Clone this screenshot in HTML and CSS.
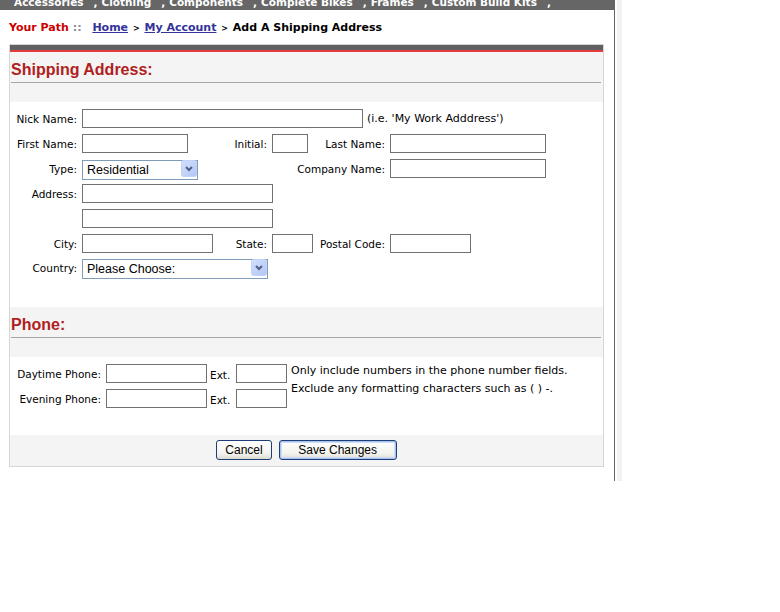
FILE: index.html
```html
<!DOCTYPE html>
<html lang="en">
<head>
  <meta charset="UTF-8">
  <title>Add A Shipping Address</title>
  <link rel="stylesheet" href="styles.css">
</head>
<body>
  <div class="shell">
    <div class="page">
      <div class="nav">
        <ul class="nav-list">
          <li>Accessories</li><li class="sep">,</li>
          <li>Clothing</li><li class="sep">,</li>
          <li>Components</li><li class="sep">,</li>
          <li>Complete Bikes</li><li class="sep">,</li>
          <li>Frames</li><li class="sep">,</li>
          <li>Custom Build Kits</li><li class="sep">,</li>
        </ul>
      </div>

      <div class="path">
        <span class="path-label">Your Path</span>
        <span class="path-colons">::</span>
        <a href="#" class="path-link">Home</a>
        <span class="gt">&gt;</span>
        <a href="#" class="path-link">My Account</a>
        <span class="gt">&gt;</span>
        <span class="path-current">Add A Shipping Address</span>
      </div>

      <form class="box">
        <div class="box-top"></div>

        <div class="section-head"><h2>Shipping Address:</h2></div>
        <div class="section-body addr-body">
          <div class="addr-grid">
            <label class="lbl">Nick Name:</label>
            <div class="nick-cell">
              <input type="text" class="in-nick">
              <span class="hint">(i.e. 'My Work Adddress')</span>
            </div>

            <label class="lbl">First Name:</label>
            <input type="text" class="in-first">
            <label class="lbl">Initial:</label>
            <input type="text" class="in-initial">
            <label class="lbl">Last Name:</label>
            <input type="text" class="in-last">

            <label class="lbl">Type:</label>
            <div class="select-wrap sel-type">
              <select><option>Residential</option></select>
              <span class="sel-btn"><svg width="16" height="17" viewBox="0 0 16 17"><defs><linearGradient id="g1" x1="0" y1="0" x2="1" y2="1"><stop offset="0" stop-color="#d3e0fd"/><stop offset="1" stop-color="#b1c6f4"/></linearGradient></defs><rect x="0.5" y="0.5" width="15" height="16" rx="2" fill="url(#g1)" stroke="#c3d3f7"/><path d="M5 7 L8 10 L11 7" fill="none" stroke="#4d6185" stroke-width="2"/></svg></span>
            </div>
            <label class="lbl lbl-company">Company Name:</label>
            <input type="text" class="in-company">

            <label class="lbl">Address:</label>
            <input type="text" class="in-address row-end">
            <span></span>
            <input type="text" class="in-address row-end">

            <label class="lbl">City:</label>
            <input type="text" class="in-city">
            <label class="lbl">State:</label>
            <input type="text" class="in-state">
            <label class="lbl">Postal Code:</label>
            <input type="text" class="in-postal">

            <label class="lbl lbl-country">Country:</label>
            <div class="select-wrap sel-country row-end">
              <select><option>Please Choose:</option></select>
              <span class="sel-btn"><svg width="16" height="17" viewBox="0 0 16 17"><defs><linearGradient id="g2" x1="0" y1="0" x2="1" y2="1"><stop offset="0" stop-color="#d3e0fd"/><stop offset="1" stop-color="#b1c6f4"/></linearGradient></defs><rect x="0.5" y="0.5" width="15" height="16" rx="2" fill="url(#g2)" stroke="#c3d3f7"/><path d="M5 7 L8 10 L11 7" fill="none" stroke="#4d6185" stroke-width="2"/></svg></span>
            </div>
          </div>
        </div>

        <div class="section-head"><h2>Phone:</h2></div>
        <div class="section-body phone-body">
          <div class="phone-grid">
            <label class="lbl">Daytime Phone:</label>
            <input type="text" class="in-phone">
            <span class="ext">Ext.</span>
            <input type="text" class="in-ext">
            <p class="phone-note">Only include numbers in the phone number fields.<br>Exclude any formatting characters such as ( ) -.</p>

            <label class="lbl">Evening Phone:</label>
            <input type="text" class="in-phone">
            <span class="ext">Ext.</span>
            <input type="text" class="in-ext">
          </div>
        </div>

        <div class="actions">
          <button type="button" class="btn">Cancel</button>
          <button type="button" class="btn btn-primary">Save Changes</button>
        </div>
      </form>
    </div>
  </div>
</body>
</html>
```

FILE: styles.css
```css
body {
  margin: 0;
  background-color: #ffffff;
  font-family: "DejaVu Sans", Verdana, sans-serif;
  color: #000000;
}

.shell {
  width: 617px;
  border-right: 5px solid #f2f2f2;
}

.page {
  width: 614px;
  border-right: 1px solid #666666;
  padding-bottom: 14px;
}

/* top menu, only the lower half shows */
.nav {
  height: 10px;
  overflow: hidden;
  background-color: #666666;
}

.nav-list {
  list-style: none;
  margin: -4px 0 0 0;
  padding: 0 0 0 14px;
  display: flex;
  font-size: 10.5px;
  font-weight: bold;
  line-height: 13px;
  color: #ffffff;
  white-space: nowrap;
}

.nav-list .sep {
  padding: 0 4px 0 10px;
}

/* breadcrumb */
.path {
  padding: 10px 9px 0 9px;
  margin-bottom: 7px;
  font-size: 11px;
  font-weight: bold;
  line-height: 16px;
  white-space: nowrap;
}

.path-label {
  color: #cc0000;
}

.path-colons {
  color: #8c8c8c;
  margin-right: 7px;
}

.path-link {
  color: #333399;
}

.gt {
  font-size: 8px;
  margin: 0 1px;
}

.path-current {
  color: #000000;
}

/* form box */
.box {
  margin: 0 0 0 9px;
  width: 593px;
  border: 1px solid #d6d6d6;
  background-color: #ffffff;
}

.box-top {
  height: 5px;
  background-color: #606060;
  border-bottom: 2px solid #e43b3b;
}

.section-head {
  background-color: #f4f4f4;
  padding: 8px 2px 19px 1px;
}

.section-head h2 {
  margin: 0;
  padding-bottom: 2px;
  font-family: "Liberation Sans", Arial, sans-serif;
  font-size: 16px;
  line-height: 20px;
  font-weight: bold;
  color: #b01e1e;
  border-bottom: 1px solid #a6a6a6;
}

.addr-body {
  padding: 7px 0 29px 0;
}

.phone-body {
  padding: 7px 0 27px 0;
}

.lbl {
  display: flex;
  justify-content: flex-end;
  align-items: center;
  font-size: 10.5px;
  white-space: nowrap;
}

input[type="text"] {
  box-sizing: border-box;
  height: 19px;
  margin: 0;
  padding: 0 2px;
  border: 1px solid #727272;
  background-color: #ffffff;
  justify-self: start;
  outline: none;
}

.addr-grid {
  display: grid;
  grid-template-columns: 67px 143px 37px 41px 67px 156px;
  grid-auto-rows: 19px;
  column-gap: 5px;
  row-gap: 6px;
}

.nick-cell {
  grid-column: 2 / -1;
  display: flex;
  align-items: center;
}

.hint {
  margin-left: 4px;
  font-size: 11px;
  white-space: nowrap;
}

.row-end {
  grid-column: 2 / -1;
}

.lbl-company {
  grid-column: 3 / 6;
}

.in-nick { width: 281px; }
.in-first { width: 106px; }
.in-initial { width: 36px; }
.in-last { width: 156px; }
.in-company { width: 156px; }
.in-address { width: 191px; }
.in-city { width: 131px; }
.in-state { width: 41px; }
.in-postal { width: 81px; }

/* xp style drop downs */
.select-wrap {
  position: relative;
  height: 20px;
  justify-self: start;
}

.sel-type { width: 116px; }

.sel-country {
  width: 186px;
  margin-top: -1px;
}

.lbl-country {
  margin-top: -1px;
}

.select-wrap select {
  appearance: none;
  -webkit-appearance: none;
  box-sizing: border-box;
  width: 100%;
  height: 20px;
  margin: 0;
  padding: 0 0 0 4px;
  border: 1px solid #7f9db9;
  border-radius: 0;
  background-color: #ffffff;
  font-family: "Liberation Sans", Arial, sans-serif;
  font-size: 12.5px;
  color: #000000;
}

.sel-btn {
  position: absolute;
  top: 1px;
  right: 1px;
  width: 16px;
  height: 17px;
  pointer-events: none;
}

.sel-btn svg {
  display: block;
}

/* phone rows */
.phone-grid {
  display: grid;
  grid-template-columns: 92px 100px 22px 51px 1fr;
  grid-auto-rows: 19px;
  column-gap: 4px;
  row-gap: 6px;
}

.phone-grid .lbl {
  padding-right: 1px;
}

.in-phone { width: 101px; }
.in-ext { width: 51px; }

.ext {
  display: flex;
  align-items: center;
  padding-top: 3px;
  font-size: 10.5px;
}

.phone-note {
  grid-row: span 2;
  margin: -2px 0 0 0;
  font-size: 11px;
  line-height: 18px;
  white-space: nowrap;
}

/* buttons */
.actions {
  display: flex;
  justify-content: center;
  gap: 7px;
  padding: 5px 0 6px 0;
  background-color: #f4f4f4;
}

.btn {
  box-sizing: border-box;
  height: 20px;
  padding: 0 8px;
  border: 1px solid #1c3f78;
  border-radius: 3px;
  background: linear-gradient(#ffffff, #f3f3ee 70%, #dcdad0);
  font-family: "Liberation Sans", Arial, sans-serif;
  font-size: 12px;
  color: #000000;
  cursor: pointer;
}

.btn-primary {
  width: 118px;
  box-shadow: inset 0 0 0 1px #a9c2ef, inset 0 0 0 2px #cddcf7;
}
```
